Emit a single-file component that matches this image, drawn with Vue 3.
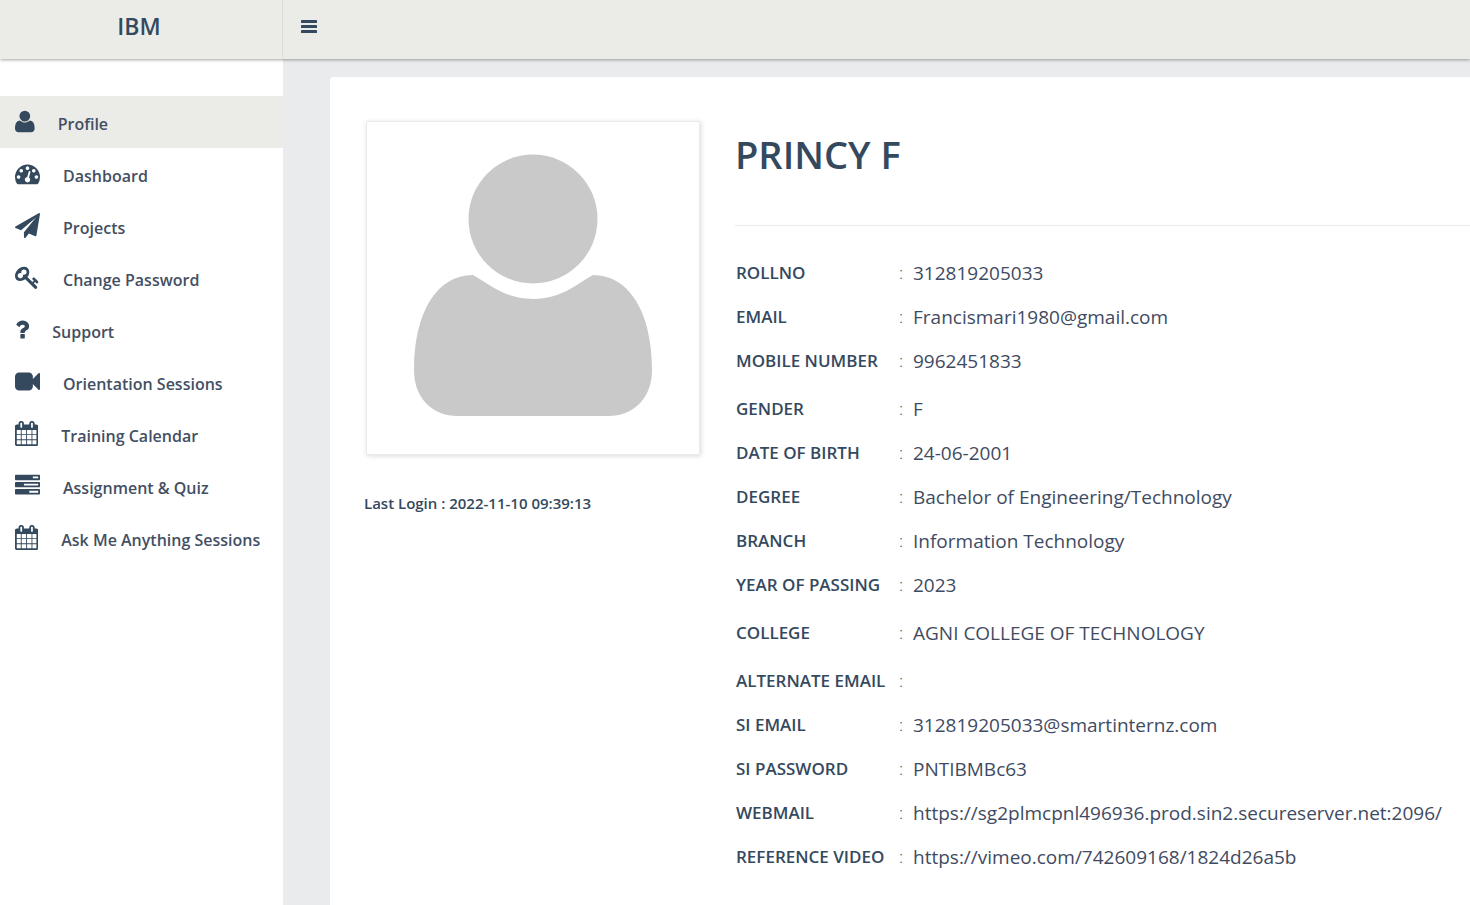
<script setup>
const glyphs = {
  user: { w: 1408, d: 'M1408 131q0 -120 -73 -189.5t-194 -69.5h-874q-121 0 -194 69.5t-73 189.5q0 53 3.5 103.5t14 109t26.5 108.5t43 97.5t62 81t85.5 53.5t111.5 20q9 0 42 -21.5t74.5 -48t108 -48t133.5 -21.5t133.5 21.5t108 48t74.5 48t42 21.5q61 0 111.5 -20t85.5 -53.5t62 -81t43 -97.5t26.5 -108.5t14 -109t3.5 -103.5zM1088 1024q0 -159 -112.5 -271.5t-271.5 -112.5t-271.5 112.5t-112.5 271.5t112.5 271.5t271.5 112.5t271.5 -112.5t112.5 -271.5z' },
  gauge: { w: 1792, d: 'M384 384q0 53 -37.5 90.5t-90.5 37.5t-90.5 -37.5t-37.5 -90.5t37.5 -90.5t90.5 -37.5t90.5 37.5t37.5 90.5zM576 832q0 53 -37.5 90.5t-90.5 37.5t-90.5 -37.5t-37.5 -90.5t37.5 -90.5t90.5 -37.5t90.5 37.5t37.5 90.5zM1004 351l101 382q6 26 -7.5 48.5t-38.5 29.5t-48 -6.5t-30 -39.5l-101 -382q-60 -5 -107 -43.5t-63 -98.5q-20 -77 20 -146t117 -89t146 20t89 117q16 60 -6 117t-72 91zM1664 384q0 53 -37.5 90.5t-90.5 37.5t-90.5 -37.5t-37.5 -90.5t37.5 -90.5t90.5 -37.5t90.5 37.5t37.5 90.5zM1024 1024q0 53 -37.5 90.5t-90.5 37.5t-90.5 -37.5t-37.5 -90.5t37.5 -90.5t90.5 -37.5t90.5 37.5t37.5 90.5zM1472 832q0 53 -37.5 90.5t-90.5 37.5t-90.5 -37.5t-37.5 -90.5t37.5 -90.5t90.5 -37.5t90.5 37.5t37.5 90.5zM1792 384q0 -261 -141 -483q-19 -29 -54 -29h-1402q-35 0 -54 29q-141 221 -141 483q0 182 71 348t191 286t286 191t348 71t348 -71t286 -191t191 -286t71 -348z' },
  plane: { w: 1792, d: 'M1764 1525q33 -24 27 -64l-256 -1536q-5 -29 -32 -45q-14 -8 -31 -8q-11 0 -24 5l-453 185l-242 -295q-18 -23 -49 -23q-13 0 -22 4q-19 7 -30.5 23.5t-11.5 36.5v349l864 1059l-1069 -925l-395 162q-37 14 -40 55q-2 40 32 59l1664 960q15 9 32 9q20 0 36 -11z' },
  key: { w: 1792, d: 'M832 1024q0 80 -56 136t-136 56t-136 -56t-56 -136q0 -42 19 -83q-41 19 -83 19q-80 0 -136 -56t-56 -136t56 -136t136 -56t136 56t56 136q0 42 -19 83q41 -19 83 -19q80 0 136 56t56 136zM1683 320q0 -17 -49 -66t-66 -49q-9 0 -28.5 16t-36.5 33t-38.5 40t-24.5 26l-96 -96l220 -220q28 -28 28 -68q0 -42 -39 -81t-81 -39q-40 0 -68 28l-671 671q-176 -131 -365 -131q-163 0 -265.5 102.5t-102.5 265.5q0 160 95 313t248 248t313 95q163 0 265.5 -102.5t102.5 -265.5q0 -189 -131 -365l355 -355l96 96q-3 3 -26 24.5t-40 38.5t-33 36.5t-16 28.5q0 17 49 66t66 49q13 0 23 -10q6 -6 46 -44.5t82 -79.5t86.5 -86t73 -78t28.5 -41z' },
  question: { w: 1024, d: 'M704 280v-240q0 -16 -12 -28t-28 -12h-240q-16 0 -28 12t-12 28v240q0 16 12 28t28 12h240q16 0 28 -12t12 -28zM1020 880q0 -54 -15.5 -101t-35 -76.5t-55 -59.5t-57.5 -43.5t-61 -35.5q-41 -23 -68.5 -65t-27.5 -67q0 -17 -12 -32.5t-28 -15.5h-240q-15 0 -25.5 18.5t-10.5 37.5v45q0 83 65 156.5t143 108.5q59 27 84 56t25 76q0 42 -46.5 74t-107.5 32q-65 0 -108 -29q-35 -25 -107 -115q-13 -16 -31 -16q-12 0 -25 8l-164 125q-13 10 -15.5 25t5.5 28q160 266 464 266q80 0 161 -31t146 -83t106 -127.5t41 -158.5z' },
  video: { w: 1792, d: 'M1792 1184v-1088q0 -42 -39 -59q-13 -5 -25 -5q-27 0 -45 19l-403 403v-166q0 -119 -84.5 -203.5t-203.5 -84.5h-704q-119 0 -203.5 84.5t-84.5 203.5v704q0 119 84.5 203.5t203.5 84.5h704q119 0 203.5 -84.5t84.5 -203.5v-165l403 402q18 19 45 19q12 0 25 -5q39 -17 39 -59z' },
  calendar: { w: 1664, d: 'M128 -128h288v288h-288v-288zM480 -128h320v288h-320v-288zM128 224h288v320h-288v-320zM480 224h320v320h-320v-320zM128 608h288v288h-288v-288zM864 -128h320v288h-320v-288zM480 608h320v288h-320v-288zM1248 -128h288v288h-288v-288zM864 224h320v320h-320v-320zM512 1088v288q0 13 -9.5 22.5t-22.5 9.5h-64q-13 0 -22.5 -9.5t-9.5 -22.5v-288q0 -13 9.5 -22.5t22.5 -9.5h64q13 0 22.5 9.5t9.5 22.5zM1248 224h288v320h-288v-320zM864 608h320v288h-320v-288zM1248 608h288v288h-288v-288zM1280 1088v288q0 13 -9.5 22.5t-22.5 9.5h-64q-13 0 -22.5 -9.5t-9.5 -22.5v-288q0 -13 9.5 -22.5t22.5 -9.5h64q13 0 22.5 9.5t9.5 22.5zM1664 1152v-1280q0 -52 -38 -90t-90 -38h-1408q-52 0 -90 38t-38 90v1280q0 52 38 90t90 38h128v96q0 66 47 113t113 47h64q66 0 113 -47t47 -113v-96h384v96q0 66 47 113t113 47h64q66 0 113 -47t47 -113v-96h128q52 0 90 -38t38 -90z' },
  tasks: { w: 1792, d: 'M1024 128h640v128h-640v-128zM640 640h1024v128h-1024v-128zM1280 1152h384v128h-384v-128zM1792 320v-256q0 -26 -19 -45t-45 -19h-1664q-26 0 -45 19t-19 45v256q0 26 19 45t45 19h1664q26 0 45 -19t19 -45zM1792 832v-256q0 -26 -19 -45t-45 -19h-1664q-26 0 -45 19t-19 45v256q0 26 19 45t45 19h1664q26 0 45 -19t19 -45zM1792 1344v-256q0 -26 -19 -45t-45 -19h-1664q-26 0 -45 19t-19 45v256q0 26 19 45t45 19h1664q26 0 45 -19t19 -45z' },
}

const menu = [
  { label: 'Profile', icon: 'user', active: true },
  { label: 'Dashboard', icon: 'gauge' },
  { label: 'Projects', icon: 'plane' },
  { label: 'Change Password', icon: 'key' },
  { label: 'Support', icon: 'question' },
  { label: 'Orientation Sessions', icon: 'video' },
  { label: 'Training Calendar', icon: 'calendar' },
  { label: 'Assignment & Quiz', icon: 'tasks' },
  { label: 'Ask Me Anything Sessions', icon: 'calendar' },
]

const details = [
  { label: 'ROLLNO', value: '312819205033' },
  { label: 'EMAIL', value: 'Francismari1980@gmail.com' },
  { label: 'MOBILE NUMBER', value: '9962451833', last: true },
  { label: 'GENDER', value: 'F' },
  { label: 'DATE OF BIRTH', value: '24-06-2001' },
  { label: 'DEGREE', value: 'Bachelor of Engineering/Technology' },
  { label: 'BRANCH', value: 'Information Technology' },
  { label: 'YEAR OF PASSING', value: '2023', last: true },
  { label: 'COLLEGE', value: 'AGNI COLLEGE OF TECHNOLOGY', last: true },
  { label: 'ALTERNATE EMAIL', value: '' },
  { label: 'SI EMAIL', value: '312819205033@smartinternz.com' },
  { label: 'SI PASSWORD', value: 'PNTIBMBc63' },
  { label: 'WEBMAIL', value: 'https://sg2plmcpnl496936.prod.sin2.secureserver.net:2096/' },
  { label: 'REFERENCE VIDEO', value: 'https://vimeo.com/742609168/1824d26a5b' },
]
</script>

<template>
  <div class="app">
    <header class="topbar">
      <div class="brand">IBM</div>
      <div class="tools">
        <button class="toggle" type="button" aria-label="Toggle menu">
          <svg viewBox="0 0 16 13" width="16" height="13" aria-hidden="true">
            <rect width="16" height="3" rx="0.6" />
            <rect y="5" width="16" height="3" rx="0.6" />
            <rect y="10" width="16" height="3" rx="0.6" />
          </svg>
        </button>
      </div>
    </header>

    <div class="body">
      <nav class="sidebar">
        <a v-for="item in menu" :key="item.label" href="#" class="link" :class="{ active: item.active }">
          <svg class="icon" :viewBox="`0 0 ${glyphs[item.icon].w} 1792`" aria-hidden="true">
            <path :d="glyphs[item.icon].d" transform="translate(0 1536) scale(1 -1)" fill-rule="evenodd" />
          </svg>
          <span class="label">{{ item.label }}</span>
        </a>
      </nav>

      <main class="content">
        <section class="card">
          <div class="side">
            <div class="photo">
              <svg viewBox="0 0 332 332" role="img" aria-label="Profile photo">
                <circle cx="166" cy="97" r="64.5" />
                <path d="M106 153C122 162 138 177 166 177S210 162 226 153C262 153 285 190 285 248C285 276 267 294 241 294H91C65 294 47 276 47 248C47 190 70 153 106 153Z" />
              </svg>
            </div>
            <p class="login">Last Login : 2022-11-10 09:39:13</p>
          </div>
          <div class="info">
            <h1>PRINCY F</h1>
            <hr />
            <table>
              <tbody>
                <tr v-for="row in details" :key="row.label" :class="{ last: row.last }">
                  <th scope="row">{{ row.label }}</th>
                  <td class="colon">:</td>
                  <td class="value">{{ row.value }}</td>
                </tr>
              </tbody>
            </table>
          </div>
        </section>
      </main>
    </div>
  </div>
</template>

<style>
body {
  margin: 0;
  background: #eaebed;
}
</style>

<style scoped>
.app {
  display: flex;
  flex-direction: column;
  min-height: 100vh;
  overflow: hidden;
  color: #34495e;
  font-family: "Open Sans", "Noto Sans", sans-serif;
}
.topbar {
  position: relative;
  z-index: 1;
  display: flex;
  height: 59px;
  background: #ebece7;
  box-shadow: 0 1px 3px rgba(0, 0, 0, 0.35);
}
.brand {
  box-sizing: border-box;
  width: 283px;
  padding: 10px 4px 0 0;
  font-size: 23px;
  font-weight: 600;
  line-height: 32px;
  text-align: center;
  border-right: 1px solid #dcddd9;
}
.tools {
  padding: 17px 15px;
}
.toggle {
  display: flex;
  padding: 3px;
  border: 0;
  background: none;
  color: inherit;
  cursor: pointer;
}
.toggle svg {
  fill: currentColor;
}
.body {
  display: flex;
  flex: 1;
}
.sidebar {
  flex: none;
  width: 283px;
  padding-top: 37px;
  background: #fff;
}
.link {
  display: flex;
  gap: 23px;
  height: 52px;
  padding-left: 15px;
  color: #444f63;
  font-size: 16px;
  font-weight: 600;
  line-height: 24px;
  text-decoration: none;
}
.link.active {
  background: #ebece7;
}
.icon {
  height: 25px;
  margin-top: 13px;
  fill: #34495e;
}
.label {
  margin-top: 16px;
}
.content {
  display: flex;
  flex: 1;
  min-width: 0;
  padding: 18px 0 0 47px;
}
.card {
  display: flex;
  flex: 1;
  gap: 35px;
  min-width: 0;
  padding: 44px 0 0 36px;
  background: #fff;
  border-radius: 4px 0 0 0;
}
.side {
  flex: none;
  width: 334px;
}
.photo {
  border: 1px solid #e9eaee;
  box-shadow: 1px 1px 5px rgba(0, 0, 0, 0.15);
}
.photo svg {
  display: block;
  width: 100%;
  fill: #c9c9c9;
}
.login {
  margin: 37px 0 0 -2px;
  font-size: 15px;
  font-weight: 600;
  line-height: 22px;
}
.info {
  flex: 1;
  min-width: 0;
}
h1 {
  margin: 7px 0 0;
  font-size: 38px;
  font-weight: 600;
  line-height: 52px;
}
hr {
  margin: 45px 0 25px;
  border: 0;
  border-top: 1px solid #eaeaea;
}
table {
  border-collapse: collapse;
}
th,
td {
  box-sizing: border-box;
  height: 44px;
  padding: 8px 0 0;
  line-height: 28px;
  vertical-align: top;
  text-align: left;
  white-space: nowrap;
}
.last th,
.last td {
  height: 48px;
}
th {
  width: 164px;
  padding-left: 1px;
  font-size: 17px;
  font-weight: 600;
}
.colon {
  width: 14px;
  font-size: 17px;
  font-weight: 300;
}
.value {
  color: #3f4b62;
  font-size: 19px;
  font-weight: 400;
}
</style>
